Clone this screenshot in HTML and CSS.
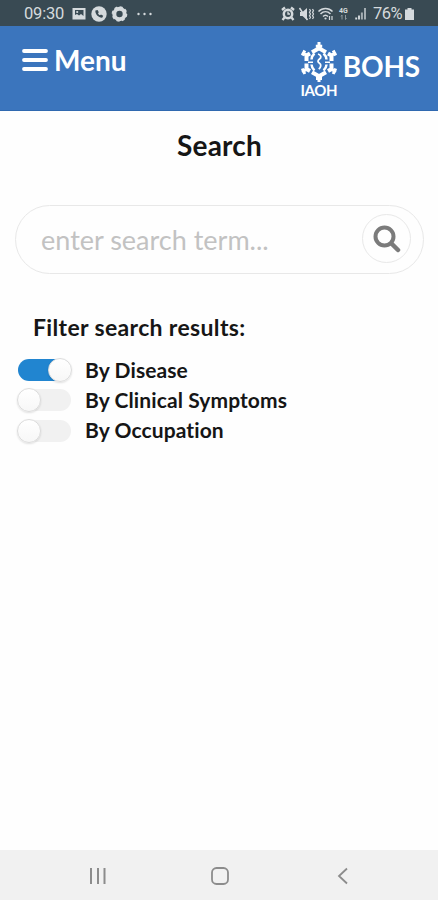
FILE: index.html
```html
<!DOCTYPE html>
<html lang="en">
<head>
<meta charset="utf-8">
<meta name="viewport" content="width=device-width, initial-scale=1">
<title>BOHS Search</title>
<link rel="stylesheet" href="styles.css">
</head>
<body>
<div class="statusbar">
  <span class="clock">09:30</span>
  <svg class="notices" width="84" height="18" viewBox="0 0 84 18" fill="#d5dadd">
    <path fill-rule="evenodd" d="M1.500 3h13v11.500h-13zM4 5v5l2-1 2 1.500 2-1.500 2.500 2V5z"/><circle cx="6.200" cy="7" r="1.100"/>
    <circle cx="28" cy="9" r="7.700"/>
    <path d="M24.400 5.400c-.6 3.600 3.400 7.600 7 7.200l.8-1.800-2.200-1.300-1 .8c-1-.4-1.700-1.200-2-2l.8-1-1.200-2.300z" fill="#3a4a53"/>
    <circle cx="48.500" cy="9" r="5.200" fill="none" stroke="#d5dadd" stroke-width="4"/>
    <circle cx="48.500" cy="9" r="7" fill="none" stroke="#d5dadd" stroke-width="1.600" stroke-dasharray="3 2.500"/>
    <circle cx="67.500" cy="9" r="1.200"/><circle cx="73.500" cy="9" r="1.200"/><circle cx="79.500" cy="9" r="1.200"/>
  </svg>
  <svg class="signals" width="88" height="18" viewBox="0 0 88 18" fill="none" stroke="#d5dadd">
    <circle cx="7" cy="9" r="4.200" stroke-width="2.500"/><path d="M1 5l3-2.500M13 5l-3-2.500M3.500 12.500l-2 2.500M10.500 12.500l2 2.500" stroke-width="2.300"/><path d="M7 6.500V9h2" stroke-width="1.300"/>
    <path d="M19 7h2.500L26 3v12l-4.500-4H19z" fill="#d5dadd" stroke="none"/><path d="M18.500 3l8 12" stroke-width="1.500"/><path d="M28.500 4l1 1.700-1 1.600 1 1.700-1 1.700 1 1.600-1 1.700M31.500 4l1 1.700-1 1.600 1 1.700-1 1.700 1 1.600-1 1.700" stroke-width="1.200"/>
    <path d="M37.500 6.500c4-4 10-4 14 0M39.500 9c3-3 7-3 10 0M42 11.500c1.500-1.500 3.500-1.500 5 0" stroke-width="1.500"/><circle cx="44.500" cy="13.500" r="1.100" fill="#d5dadd" stroke="none"/><path d="M48.500 11v4M51 11v4" stroke-width="1.200"/>
    <text x="58" y="8" class="network">4G</text>
    <path d="M61 14.500V10l-1 1.500M64.500 10v4.500l1-1.500" stroke="#8e989e"/>
    <path d="M75.200 14.500v-2M78 14.500v-4" stroke-width="1.900"/><path d="M80.900 14.500V7.500M84 14.500V3" stroke-width="2" stroke="#a4adb2"/>
  </svg>
  <span class="percent">76%</span>
  <svg width="9" height="14" viewBox="0 0 9 14" fill="#d5dadd"><path d="M2.500 1h4v1.500H9V13H0V2.500h2.500z"/></svg>
</div>
<header class="header">
  <a class="menu">
    <svg width="26" height="24" viewBox="0 0 26 24" stroke="#fff" stroke-width="3.800" stroke-linecap="round"><path d="M2 3h22M2 12h22M2 21h22"/></svg>
    <span class="menu-label">Menu</span>
  </a>
  <div class="brand">
    <div class="emblem">
      <svg width="38" height="42" viewBox="0 0 38 42" fill="none" stroke="#fff">
        <path d="M6.500 20v-5.500l3.500-2M12 11.300l7-4 7 4M28 12.500l3.500 2V20M31.500 22.500V28l-3.500 2M26 31.200l-7 4-7-4M10 30l-3.500-2v-5.500" stroke-width="4"/>
        <path d="M19 1v6M15.800 5.200h6.400M7 14.500l-5-3M4.800 9.500l-2.500 5M31 14.500l5-3M33.200 9.500l2.500 5M7 28l-5 3M2.300 27.500l2.500 5.500M31 28l5 3M35.700 27.500l-2.500 5.500M19 35v6M16 37.500h6" stroke-width="3"/>
        <path d="M14.500 12.500c-1.800 1.500-2.800 3.500-3 6M11.500 23.500c.2 2.500 1.200 4.500 3 6M23.500 12.500c1.800 1.500 2.800 3.500 3 6M26.500 23.500c-.2 2.500-1.200 4.500-3 6" stroke-width="2.500"/>
        <path d="M8 21.200h5M25 21.200h5" stroke-width="1.400"/>
        <path d="M18 13c3.500 1 3.500 3.500 1.500 5s-2 3 0 4.200 1.500 4-.7 6" stroke-width="1.800"/>
      </svg>
      <span class="emblem-label">IAOH</span>
    </div>
    <span class="brand-name">BOHS</span>
  </div>
</header>
<main class="main">
  <h1 class="title">Search</h1>
  <div class="search">
    <span class="placeholder">enter search term...</span>
    <button class="go" aria-label="Search">
      <svg width="28" height="28" viewBox="0 0 28 28" fill="none" stroke="#7b7b7b"><circle cx="11.500" cy="11.500" r="9" stroke-width="4"/><path d="M18.500 18.500l6.500 6.500" stroke-width="4.500" stroke-linecap="round"/></svg>
    </button>
  </div>
  <h2 class="filter-title">Filter search results:</h2>
  <div class="filters">
    <div class="filter"><span class="toggle on"></span><span class="filter-label">By Disease</span></div>
    <div class="filter"><span class="toggle"></span><span class="filter-label">By Clinical Symptoms</span></div>
    <div class="filter"><span class="toggle"></span><span class="filter-label">By Occupation</span></div>
  </div>
</main>
<nav class="navbar">
  <svg width="18" height="18" viewBox="0 0 18 18" stroke="#8c8c8c" stroke-width="2"><path d="M3 1v16M10 1v16M16.500 1v16"/></svg>
  <svg width="18" height="18" viewBox="0 0 18 18" fill="none" stroke="#8c8c8c" stroke-width="1.800"><rect x="1" y="1" width="16" height="16" rx="4.500"/></svg>
  <svg width="18" height="18" viewBox="0 0 18 18" fill="none" stroke="#8c8c8c" stroke-width="1.800"><path d="M13 1.500L5 9l8 7.500"/></svg>
</nav>
</body>
</html>
```
FILE: styles.css
```css
* { box-sizing: border-box; }
body {
  margin: 0;
  height: 900px;
  display: flex;
  flex-direction: column;
  overflow: hidden;
  background: #fefefe;
  color: #161616;
  font-family: Lato, "Liberation Sans", sans-serif;
  font-variant-ligatures: none;
}
svg { display: block; flex: none; }
.statusbar {
  height: 26px;
  padding: 1px 24px 0;
  display: flex;
  align-items: center;
  background: #394a53;
  color: #d5dadd;
  font: 16.500px/26px Roboto, sans-serif;
}
.clock { width: 47px; letter-spacing: -0.200px; }
.signals { margin-left: auto; margin-right: 4px; }
.percent { width: 32px; letter-spacing: -0.500px; }
.network { font: bold 7px Roboto, sans-serif; fill: #d5dadd; stroke: none; }
.header {
  height: 85px;
  padding: 15px 18px 0 22px;
  display: flex;
  justify-content: space-between;
  align-items: flex-start;
  background: #3b75bd;
  border-bottom: 1px solid #3069b0;
  color: #fff;
  font-weight: 700;
}
.menu { display: flex; align-items: center; gap: 6px; padding-top: 1px; }
.menu-label { font-size: 28px; line-height: 36px; }
.brand { display: flex; }
.emblem { width: 38px; margin-right: 5px; }
.emblem-label {
  display: block;
  font: 700 15px/14px Lato, sans-serif;
  letter-spacing: -0.400px;
  text-align: center;
}
.brand-name {
  font-size: 28px;
  line-height: 36px;
  margin-top: 7px;
  letter-spacing: -0.200px;
}
.main { flex: 1; padding: 15px 14px 0 15px; }
.title {
  margin: 0;
  font-size: 28px;
  line-height: 38px;
  font-weight: 700;
  letter-spacing: 0.200px;
  text-align: center;
}
.search {
  height: 69px;
  margin-top: 41px;
  padding: 0 12px 2px 25px;
  display: flex;
  align-items: center;
  justify-content: space-between;
  border: 1px solid #e8e8e8;
  border-radius: 35px;
}
.placeholder { color: #c2c2c2; font-size: 27px; padding-top: 2px; }
.go {
  width: 49px;
  height: 49px;
  padding: 0;
  display: grid;
  place-items: center;
  border: 1px solid #e8e8e8;
  border-radius: 50%;
  background: none;
}
.filter-title {
  margin: 38px 0 13px 18px;
  font-size: 23px;
  line-height: 30px;
  font-weight: 700;
  letter-spacing: 0.350px;
}
.filters { padding-left: 3px; }
.filter {
  height: 30.300px;
  display: flex;
  align-items: center;
  gap: 14px;
  font-size: 21px;
  font-weight: 700;
}
.filter-label { padding-bottom: 2px; letter-spacing: 0.100px; }
.toggle {
  width: 53px;
  height: 22px;
  display: flex;
  align-items: center;
  border-radius: 11px;
  background: #f1f1f1;
}
.toggle::before {
  content: "";
  width: 22px;
  height: 22px;
  margin: 0 -1px;
  border-radius: 50%;
  background: linear-gradient(#fff, #f7f7f7);
  border: 1px solid #dcdcdc;
  box-shadow: 0 1px 2px rgba(0, 0, 0, 0.120);
}
.toggle.on { background: #2185d0; justify-content: flex-end; }
.navbar {
  height: 50px;
  padding: 2px 86px 0 88px;
  display: flex;
  align-items: center;
  justify-content: space-between;
  background: #f1f1f1;
}
```
